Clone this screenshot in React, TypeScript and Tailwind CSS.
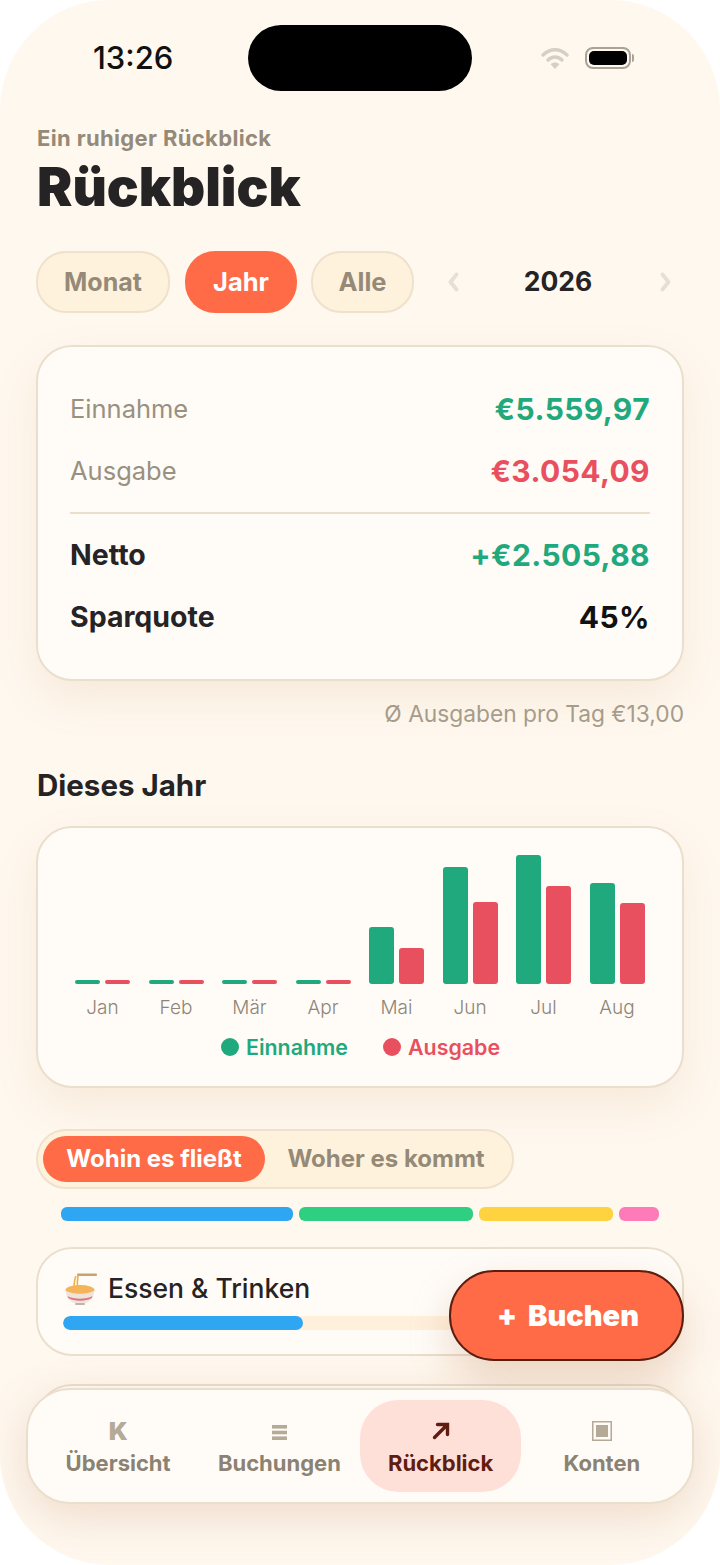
import React from "react";

const months = [
  { m: "Jan", g: 4, r: 4 },
  { m: "Feb", g: 4, r: 4 },
  { m: "Mär", g: 4, r: 4 },
  { m: "Apr", g: 4, r: 4 },
  { m: "Mai", g: 57, r: 36 },
  { m: "Jun", g: 117, r: 82 },
  { m: "Jul", g: 129, r: 98 },
  { m: "Aug", g: 101, r: 81 },
];

function Bowl() {
  return (
    <svg width="34" height="34" viewBox="0 0 34 34" className="shrink-0">
      <rect x="13" y="1.5" width="20" height="2.6" rx="1" fill="#C9A36B" />
      <path d="M12 4 C10 8 10 12 10 18 M14 4 C13 9 13 13 14 18" stroke="#E8B04A" strokeWidth="1.6" fill="none" />
      <ellipse cx="16" cy="18" rx="14.5" ry="5" fill="#F3B45A" />
      <path d="M1.5 18 C2 27 8 32 16 32 C24 32 30 27 30.5 18 C26 23 6 23 1.5 18Z" fill="#EFE3DC" />
      <path d="M3.4 24 C9 27.5 23 27.5 28.6 24 L27.6 26.3 C22 29.4 10 29.4 4.6 26.3Z" fill="#D9757C" />
      <rect x="11" y="31" width="10" height="2" rx="1" fill="#BDB4AF" />
    </svg>
  );
}

function Row({ label, value, strong, color }: { label: string; value: string; strong?: boolean; color: string }) {
  return (
    <div className="flex h-10 items-center justify-between">
      <span className={strong ? "text-[28.5px] font-bold text-[#262324]" : "text-[25.5px] font-normal text-[#9A907F]"}>{label}</span>
      <span className={`text-[30px] font-bold tracking-[0.4px] ${color}`}>{value}</span>
    </div>
  );
}

function Tab({ label, icon, active }: { label: string; icon: React.ReactNode; active?: boolean }) {
  return (
    <div className={`flex h-[92px] flex-col items-center rounded-[38px] ${active ? "bg-[#FFE0D8]" : ""}`}>
      <div className="mt-[19px] flex h-6 items-center justify-center">{icon}</div>
      <span className={`mt-[6px] text-[22px] leading-[28px] font-bold ${active ? "text-[#5F1D12]" : "text-[#8C8272]"}`}>{label}</span>
    </div>
  );
}

export default function App() {
  return (
    <div className="h-[1565px] w-[720px] overflow-hidden bg-white font-['Inter',sans-serif]">
      <div className="relative h-[1565px] w-[720px] overflow-hidden rounded-[110px] bg-[#FFF8EF]">
        {/* status bar */}
        <div className="flex h-[91px] items-end pt-[25px]">
          <div className="flex h-[66px] w-[248px] items-center pt-[1px] pl-[93px] text-[31px] font-medium text-[#111111]">13:26</div>
          <div className="h-[66px] w-[224px] rounded-full bg-black" />
          <div className="flex h-[66px] flex-1 items-center gap-[16px] pl-[69px]">
            <svg width="28" height="22" viewBox="0 0 28 22" fill="none">
              <path d="M2 8 C9 1 19 1 26 8" stroke="#D6D0C4" strokeWidth="3.4" strokeLinecap="round" />
              <path d="M7 13 C11 9 17 9 21 13" stroke="#D6D0C4" strokeWidth="3.4" strokeLinecap="round" />
              <path d="M14 22 L9.6 17.2 C12 15 16 15 18.4 17.2Z" fill="#D6D0C4" />
            </svg>
            <div className="flex items-center">
              <div className="h-[22px] w-[46px] rounded-[8px] border-2 border-[#A9A397] p-[2px]">
                <div className="h-full w-full rounded-[5px] bg-black" />
              </div>
              <div className="ml-[1px] h-[8px] w-[2px] rounded-r-sm bg-[#A9A397]" />
            </div>
          </div>
        </div>

        {/* content */}
        <div className="px-[36px]">
          <div className="mt-[33px] pl-[1px] text-[22px] leading-7 font-bold tracking-[0.35px] text-[#958A78]">Ein ruhiger Rückblick</div>
          <h1 className="mt-[7px] pl-[1px] text-[53px] leading-[56px] font-black text-[#262324]">Rückblick</h1>

          <div className="mt-[36px] flex items-center">
            <div className="flex h-[62px] w-[134px] items-center justify-center rounded-[30px] border-2 border-[#EFE2CC] bg-[#FFF2DC] pt-[1px] text-[25px] font-bold text-[#958A78]">Monat</div>
            <div className="ml-[15px] flex h-[62px] w-[112px] items-center justify-center rounded-[30px] bg-[#FF6B47] pt-[1px] text-[25.5px] font-bold text-white">Jahr</div>
            <div className="ml-[14px] flex h-[62px] w-[103px] items-center justify-center rounded-[30px] border-2 border-[#EFE2CC] bg-[#FFF2DC] pt-[1px] text-[25.5px] font-bold text-[#958A78]">Alle</div>
            <div className="flex flex-1 items-center justify-between pr-[12px] pl-[33px]">
              <svg width="12" height="20" viewBox="0 0 12 20" fill="none"><path d="M9.5 2.5 L3.5 10 L9.5 17.5" stroke="#E6DFD2" strokeWidth="3.8" strokeLinecap="round" strokeLinejoin="round" /></svg>
              <span className="pr-[3px] text-[26.5px] font-bold text-[#262324]">2026</span>
              <svg width="12" height="20" viewBox="0 0 12 20" fill="none"><path d="M2.5 2.5 L8.5 10 L2.5 17.5" stroke="#E6DFD2" strokeWidth="3.8" strokeLinecap="round" strokeLinejoin="round" /></svg>
            </div>
          </div>

          {/* summary */}
          <div className="mt-[32px] rounded-[36px] border-2 border-[#EADFCD] bg-[#FFFCF8] pt-[42px] pr-[32px] pb-[42px] pl-[32px] shadow-[0_18px_44px_rgba(190,130,70,0.12)]">
            <Row label="Einnahme" value="€5.559,97" color="text-[#1FA97C]" />
            <div className="mt-[22px]"><Row label="Ausgabe" value="€3.054,09" color="text-[#E9505F]" /></div>
            <div className="mt-[21px] h-[2px] bg-[#EADFCD]" />
            <div className="mt-[21px]"><Row strong label="Netto" value="+€2.505,88" color="text-[#1FA97C]" /></div>
            <div className="mt-[22px]"><Row strong label="Sparquote" value="45%" color="text-[#111111]" /></div>
          </div>

          <div className="mt-[18px] text-right text-[22.75px] leading-[30px] text-[#A69C8B]">Ø Ausgaben pro Tag €13,00</div>

          <h2 className="mt-[38px] pl-[1px] text-[29.5px] leading-9 font-bold text-[#262324]">Dieses Jahr</h2>

          {/* chart */}
          <div className="mt-[23px] rounded-[36px] border-2 border-[#EADFCD] bg-[#FFFCF8] pt-[26px] pr-[36px] pb-[25px] pl-[37px] shadow-[0_18px_44px_rgba(190,130,70,0.12)]">
            <div className="flex h-[130px] items-end gap-[18.5px]">
              {months.map((x) => (
                <div key={x.m} className="flex w-[55px] items-end gap-[5px]">
                  <div className="w-[25px] rounded-[3px] bg-[#1FA97C]" style={{ height: x.g }} />
                  <div className="w-[25px] rounded-[3px] bg-[#E9505F]" style={{ height: x.r }} />
                </div>
              ))}
            </div>
            <div className="mt-[12px] flex gap-[18.5px]">
              {months.map((x) => (
                <div key={x.m} className="w-[55px] text-center text-[19px] leading-6 font-[350] text-[#8E8576]">{x.m}</div>
              ))}
            </div>
            <div className="mt-[13px] flex h-7 items-center justify-center gap-[35px] text-[21.4px] font-semibold">
              <div className="flex items-center gap-[7px] text-[#1FA97C]"><span className="h-[18px] w-[18px] rounded-full bg-[#1FA97C]" />Einnahme</div>
              <div className="flex items-center gap-[7px] text-[#E9505F]"><span className="h-[18px] w-[18px] rounded-full bg-[#E9505F]" />Ausgabe</div>
            </div>
          </div>

          {/* segmented */}
          <div className="mt-[41px] flex h-[60px] w-[478px] items-center rounded-[30px] border-2 border-[#EFE2CC] bg-[#FFF2DC] p-[5px]">
            <div className="flex h-[46px] w-[222px] items-center justify-center rounded-[23px] bg-[#FF6B47] text-[24px] font-bold text-white">Wohin es fließt</div>
            <div className="flex h-[46px] flex-1 items-center justify-center text-[24px] font-bold text-[#958A78]">Woher es kommt</div>
          </div>

          {/* stacked */}
          <div className="mx-[25px] mt-[18px] flex h-[14px] gap-[6px]">
            <div className="w-[232px] rounded-[6px] bg-[#2EA6F2]" />
            <div className="w-[174px] rounded-[6px] bg-[#2ECF80]" />
            <div className="w-[134px] rounded-[6px] bg-[#FFD23F]" />
            <div className="w-[40px] rounded-[6px] bg-[#FF7AB8]" />
          </div>

          {/* category */}
          <div className="mt-[26px] rounded-[36px] border-2 border-[#EADFCD] bg-[#FFFCF8] px-[25px] pt-[22px] pb-[24px]">
            <div className="flex h-9 items-center gap-[10px] pl-[1px] text-[26.5px] font-medium text-[#262324]">
              <Bowl />
              <span>Essen &amp; Trinken</span>
            </div>
            <div className="mt-[9px] h-[14px] overflow-hidden rounded-[7px] bg-[#FFF0DC]">
              <div className="h-full w-[240px] rounded-[7px] bg-[#2EA6F2]" />
            </div>
          </div>
          <div className="mt-[28px] h-[110px] rounded-[36px] border-2 border-[#EADFCD] bg-[#FFFCF8]" />
        </div>

        {/* FAB */}
        <div className="absolute top-[1270px] left-[449px] flex h-[91px] w-[235px] items-center justify-center gap-[11px] rounded-[45px] border-2 border-[#5A1E10] bg-[#FF6B47] pl-[3px] text-[29px] font-black text-white shadow-[0_18px_44px_rgba(170,100,50,0.24)]">
          <span>+</span>
          <span>Buchen</span>
        </div>

        {/* tab bar */}
        <div className="absolute top-[1388px] left-[26px] grid h-[116px] w-[668px] grid-cols-4 rounded-[44px] border-2 border-[#EADFCD] bg-[#FFFCF8] px-[9.5px] pt-[10px] shadow-[0_12px_48px_rgba(170,100,50,0.2)]">
          <Tab label="Übersicht" icon={<span className="text-[25px] leading-6 font-black text-[#B5A998]">K</span>} />
          <Tab
            label="Buchungen"
            icon={
              <svg width="15" height="15" viewBox="0 0 15 15" className="mt-[3px]">
                <rect y="0" width="15" height="3.6" fill="#B5A998" />
                <rect y="5.7" width="15" height="3.6" fill="#B5A998" />
                <rect y="11.4" width="15" height="3.6" fill="#B5A998" />
              </svg>
            }
          />
          <Tab
            active
            label="Rückblick"
            icon={
              <svg width="18" height="18" viewBox="0 0 18 18" fill="none">
                <path d="M2.5 15.5 L15 3 M5.5 2.5 H15.5 V12.5" stroke="#5F1D12" strokeWidth="3.4" strokeLinecap="round" />
              </svg>
            }
          />
          <Tab
            label="Konten"
            icon={
              <svg width="20" height="20" viewBox="0 0 20 20" fill="none">
                <rect x="0.75" y="0.75" width="18.5" height="18.5" stroke="#B5A998" strokeWidth="1.5" />
                <rect x="4" y="4" width="12" height="12" fill="#B5A998" />
              </svg>
            }
          />
        </div>
      </div>
    </div>
  );
}
